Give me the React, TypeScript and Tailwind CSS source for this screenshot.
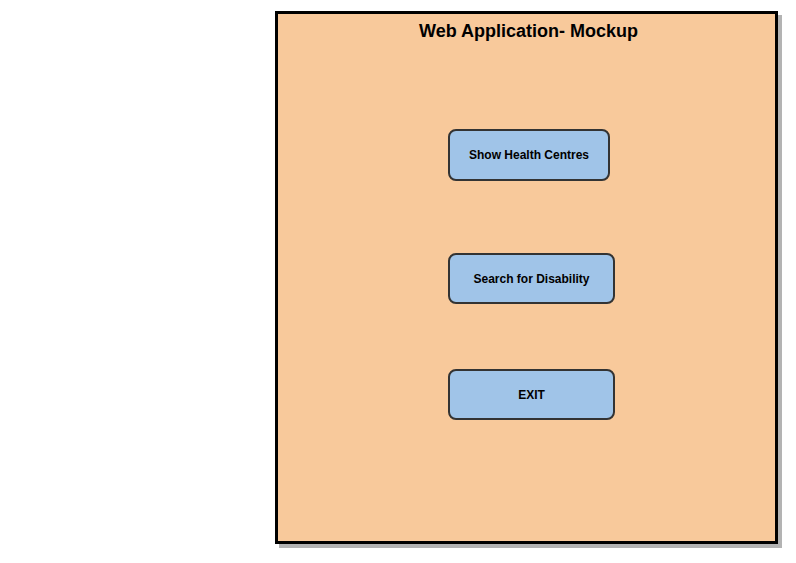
export default function App() {
  return (
    <div className="w-[796px] h-[563px] bg-white font-['Liberation_Sans',Arial,sans-serif] text-black">
      <div className="ml-[275px] pt-[11px]">
        <div className="w-[503px] h-[533px] bg-[#f8c99b] border-[3px] border-black shadow-[4px_4px_0_0_#b3b3b3] flex flex-col">
          <div className="pt-[7px] h-[27px] text-[18px] leading-[21px] font-bold text-center pl-[4px]">
            Web Application- Mockup
          </div>
          <div className="pl-[170px] flex flex-col items-start">
            <button className="mt-[88px] w-[162px] h-[52px] rounded-[8px] border-2 border-[#333] bg-[#a0c4e8] text-[12px] font-bold">
              Show Health Centres
            </button>
            <button className="mt-[72px] w-[167px] h-[51px] rounded-[8px] border-2 border-[#333] bg-[#a0c4e8] text-[12px] font-bold">
              Search for Disability
            </button>
            <button className="mt-[65px] w-[167px] h-[51px] rounded-[8px] border-2 border-[#333] bg-[#a0c4e8] text-[12px] font-bold">
              EXIT
            </button>
          </div>
        </div>
      </div>
    </div>
  )
}
